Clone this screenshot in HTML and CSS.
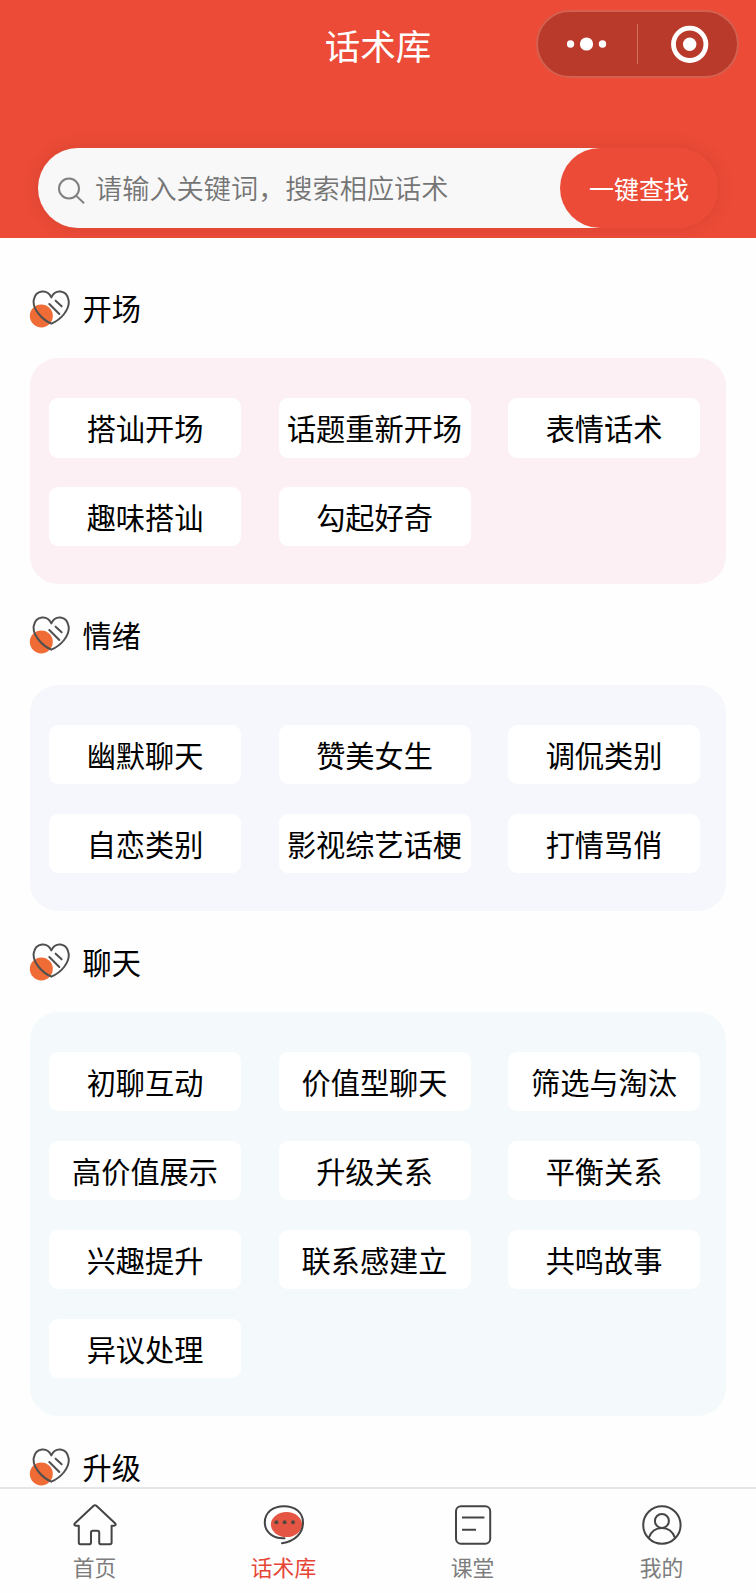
FILE: index.html
```html
<!DOCTYPE html>
<html lang="zh-CN">
<head>
  <meta charset="UTF-8">
  <meta name="viewport" content="width=device-width, initial-scale=1.0">
  <title>话术库</title>
  <link rel="stylesheet" href="styles.css">
</head>
<body>
  <!-- Shared heart icon -->
  <svg class="defs" width="0" height="0">
    <symbol id="heart" viewBox="30 45 124 114">
      <circle cx="67" cy="123" r="34.5" fill="#f06c36"/>
      <path d="M97 67C86 42 50 42 44 76C41 104 70 134 97 146C126 134 153 104 149 76C143 42 108 42 97 67Z" fill="none" stroke="#505050" stroke-width="6" stroke-linejoin="round"/>
      <path d="M91 87L121 117M110 77L128 94" fill="none" stroke="#505050" stroke-width="6" stroke-linecap="round"/>
    </symbol>
  </svg>

  <div class="page">
    <header class="header">
      <div class="navbar">
        <h1 class="title">话术库</h1>
        <div class="capsule">
          <div class="capsule-item">
            <svg width="42" height="16" viewBox="0 0 42 16" fill="#fff">
              <circle cx="3.5" cy="8" r="3.7"/>
              <circle cx="19.5" cy="8" r="6.6"/>
              <circle cx="35.5" cy="8" r="3.7"/>
            </svg>
          </div>
          <div class="capsule-line"></div>
          <div class="capsule-item">
            <svg width="42" height="38" viewBox="0 0 42 38">
              <circle cx="22.7" cy="19.3" r="16.2" fill="none" stroke="#fff" stroke-width="4.8"/>
              <circle cx="22.7" cy="19.3" r="6.7" fill="#fff"/>
            </svg>
          </div>
        </div>
      </div>

      <div class="search">
        <svg class="search-icon" width="28" height="28" viewBox="0 0 28 28" fill="none" stroke="#808080" stroke-width="2">
          <circle cx="11" cy="11.5" r="10"/>
          <path d="M18.1 18.6L26 26.2"/>
        </svg>
        <span class="placeholder">请输入关键词，搜索相应话术</span>
        <button class="search-btn">一键查找</button>
      </div>
    </header>

    <main class="content">
      <section>
        <h2><svg class="heart"><use href="#heart"/></svg>开场</h2>
        <div class="panel pink">
          <div class="chip">搭讪开场</div>
          <div class="chip">话题重新开场</div>
          <div class="chip">表情话术</div>
          <div class="chip">趣味搭讪</div>
          <div class="chip">勾起好奇</div>
        </div>
      </section>

      <section>
        <h2><svg class="heart"><use href="#heart"/></svg>情绪</h2>
        <div class="panel purple">
          <div class="chip">幽默聊天</div>
          <div class="chip">赞美女生</div>
          <div class="chip">调侃类别</div>
          <div class="chip">自恋类别</div>
          <div class="chip">影视综艺话梗</div>
          <div class="chip">打情骂俏</div>
        </div>
      </section>

      <section>
        <h2><svg class="heart"><use href="#heart"/></svg>聊天</h2>
        <div class="panel blue">
          <div class="chip">初聊互动</div>
          <div class="chip">价值型聊天</div>
          <div class="chip">筛选与淘汰</div>
          <div class="chip">高价值展示</div>
          <div class="chip">升级关系</div>
          <div class="chip">平衡关系</div>
          <div class="chip">兴趣提升</div>
          <div class="chip">联系感建立</div>
          <div class="chip">共鸣故事</div>
          <div class="chip">异议处理</div>
        </div>
      </section>

      <section>
        <h2><svg class="heart"><use href="#heart"/></svg>升级</h2>
      </section>
    </main>

    <nav class="tabbar">
      <div class="tab">
        <svg width="46" height="44" viewBox="0 0 46 44" fill="none" stroke="#444" stroke-width="2" stroke-linejoin="round" stroke-linecap="round">
          <path d="M21.6 2.8Q23 1.6 24.4 2.8L43.3 20.4Q44.4 22.6 42 22.8H39.6V39.6Q39.6 41.2 38 41.2H29Q27.2 41.2 27.2 39.4V29.6Q27.2 27.8 25.4 27.8H20.8Q19 27.8 19 29.6V39.4Q19 41.2 17.2 41.2H8.4Q6.8 41.2 6.8 39.6V22.8H4Q1.6 22.6 2.7 20.4Z"/>
        </svg>
        <span>首页</span>
      </div>
      <div class="tab active">
        <svg width="46" height="44" viewBox="0 0 46 44">
          <ellipse cx="25.5" cy="21.6" rx="15.6" ry="12.5" fill="#e45643"/>
          <path d="M23.5 35.2C11.5 35.8 3.8 28.5 3.8 19.5C3.8 9.5 12 3.2 23 3.2C34 3.2 42 9.5 42 19.5C42 30 34.5 38 21 40.2" fill="none" stroke="#444" stroke-width="2" stroke-linecap="round"/>
          <g fill="#55463f">
            <circle cx="15.4" cy="19.3" r="2"/>
            <circle cx="23.6" cy="19.3" r="2"/>
            <circle cx="32" cy="19.3" r="2"/>
          </g>
        </svg>
        <span>话术库</span>
      </div>
      <div class="tab">
        <svg width="46" height="44" viewBox="0 0 46 44" fill="none" stroke="#444" stroke-width="2">
          <rect x="6" y="3.2" width="34.2" height="37.6" rx="5"/>
          <path d="M12 14.4H34.4M12 26.8H26"/>
        </svg>
        <span>课堂</span>
      </div>
      <div class="tab">
        <svg width="46" height="44" viewBox="0 0 46 44" fill="none" stroke="#444" stroke-width="2">
          <circle cx="22.9" cy="22" r="18.7"/>
          <circle cx="22.9" cy="17.9" r="7"/>
          <path d="M9.7 34.8C12 28.5 16.8 24.9 22.9 24.9S33.8 28.5 36.1 34.8"/>
        </svg>
        <span>我的</span>
      </div>
    </nav>
  </div>
</body>
</html>
```

FILE: styles.css
```css
* {
  box-sizing: border-box;
}

body {
  margin: 0;
  font-family: "Noto Sans CJK SC", sans-serif;
  background-color: #fefefe;
  color: #000;
}

.defs {
  display: block;
}

.page {
  display: flex;
  flex-direction: column;
  height: 1593px;
  overflow: hidden;
}

/* Header */
.header {
  flex: none;
  height: 238px;
  background-color: #eb4b37;
  overflow: hidden;
}

.navbar {
  display: grid;
  grid-template-columns: 1fr auto 1fr;
  align-items: center;
  height: 88px;
  padding: 0 17px;
}

.title {
  grid-column: 2;
  margin: 1px 0 0;
  font-size: 35.5px;
  font-weight: 400;
  line-height: 50px;
  color: #fff;
}

.capsule {
  justify-self: end;
  display: flex;
  align-items: center;
  width: 203px;
  height: 68px;
  border: 2px solid #d4604f;
  border-radius: 34px;
  background-color: #b93a2b;
}

.capsule-item {
  flex: 1;
  display: flex;
  justify-content: center;
}

.capsule-item svg {
  display: block;
}

.capsule-line {
  width: 1px;
  height: 40px;
  background-color: #d0705f;
}

.search {
  display: flex;
  align-items: center;
  width: 680px;
  height: 80px;
  margin: 60px 0 0 38px;
  padding-left: 20px;
  border-radius: 40px;
  background: linear-gradient(to right, #f8f8f8 620px, #eb4b37 620px);
  box-shadow: 0 0 20px rgba(0, 0, 0, 0.08);
}

.search-icon {
  margin-top: 6px;
}

.placeholder {
  flex: 1;
  margin-left: 9px;
  padding-bottom: 2px;
  font-size: 27.2px;
  font-weight: 350;
  line-height: 40px;
  color: #757575;
  white-space: nowrap;
}

.search-btn {
  width: 158px;
  height: 80px;
  padding: 0;
  border: none;
  border-radius: 40px;
  background-color: #eb4b37;
  font-family: inherit;
  font-size: 25px;
  color: #fff;
}

/* Sections */
.content {
  flex: 1;
  min-height: 0;
  padding: 19px 30px 0;
  overflow: hidden;
}

h2 {
  display: flex;
  align-items: center;
  height: 101px;
  margin: 0;
  padding-bottom: 1px;
  font-size: 29.2px;
  font-weight: 400;
}

.heart {
  width: 41.3px;
  height: 38px;
  margin: 3px 12px 0 -0.7px;
}

.panel {
  display: grid;
  grid-template-columns: repeat(3, 192px);
  grid-auto-rows: 59.5px;
  gap: 29.4px 37.5px;
  padding: 40px 0 37.6px 19px;
  border-radius: 28px;
}

.pink {
  background-color: #fcf0f4;
}

.purple {
  background-color: #f6f7fc;
}

.blue {
  background-color: #f4fafc;
}

.chip {
  display: flex;
  align-items: center;
  justify-content: center;
  padding-bottom: 1px;
  border-radius: 9px;
  background-color: #fff;
  font-size: 29.2px;
  white-space: nowrap;
}

/* Bottom tab bar */
.tabbar {
  flex: none;
  display: flex;
  height: 106px;
  border-top: 2px solid #e6e6e6;
  background-color: #fefefe;
}

.tab {
  flex: 1;
  display: flex;
  flex-direction: column;
  align-items: center;
  padding-top: 14px;
  font-size: 21.8px;
  line-height: 32px;
  color: #7d7d7d;
}

.tab span {
  margin-top: 4px;
}

.active {
  color: #e64536;
}
```
